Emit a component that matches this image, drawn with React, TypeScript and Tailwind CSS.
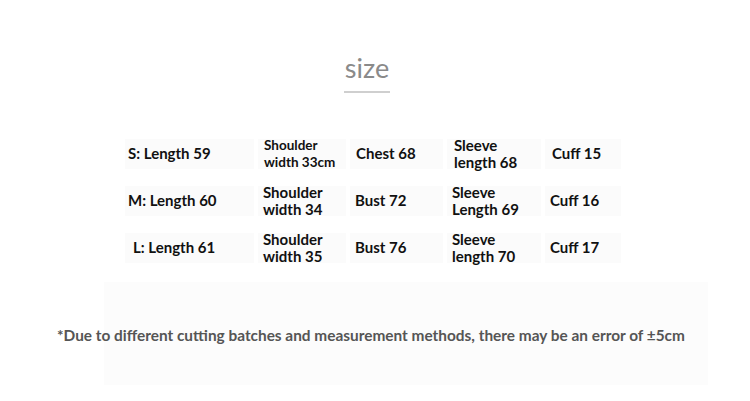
import React from 'react';

type Cell = { lines: string[]; pad: number; w: number; small?: boolean };

const rows: Cell[][] = [
  [
    { lines: ['S: Length 59'], pad: 3, w: 133 },
    { lines: ['Shoulder', 'width 33cm'], pad: 6, w: 92, small: true },
    { lines: ['Chest 68'], pad: 6, w: 97 },
    { lines: ['Sleeve', 'length 68'], pad: 7, w: 98 },
    { lines: ['Cuff 15'], pad: 7, w: 80 },
  ],
  [
    { lines: ['M: Length 60'], pad: 3, w: 133 },
    { lines: ['Shoulder', 'width 34'], pad: 5, w: 92 },
    { lines: ['Bust 72'], pad: 5, w: 97 },
    { lines: ['Sleeve', 'Length 69'], pad: 5, w: 98 },
    { lines: ['Cuff 16'], pad: 5, w: 80 },
  ],
  [
    { lines: ['L: Length 61'], pad: 8, w: 133 },
    { lines: ['Shoulder', 'width 35'], pad: 5, w: 92 },
    { lines: ['Bust 76'], pad: 5, w: 97 },
    { lines: ['Sleeve', 'length 70'], pad: 5, w: 98 },
    { lines: ['Cuff 17'], pad: 5, w: 80 },
  ],
];

export default function App() {
  return (
    <div className="w-[750px] h-[401px] bg-white overflow-hidden font-['Lato',sans-serif]">
      <div className="flex flex-col items-center pt-[50px] pr-[16px]">
        <div className="text-[27px] leading-[36px] text-[#8a8a8a]">size</div>
        <div className="mt-[5px] w-[46px] h-[2px] bg-[#cfcfcf]" />
      </div>

      <div className="mt-[43px] ml-[125px] flex flex-col gap-[12px]">
        {rows.map((row, ri) => (
          <div key={ri} className="flex h-[35px]">
            {row.map((c, ci) => (
              <div key={ci} className="flex items-center pr-[4px]" style={{ width: c.w }}>
                <div
                  className="h-[30px] flex items-center bg-[#fbfbfb] w-full"
                  style={{ paddingLeft: c.pad }}
                >
                  <div
                    className={
                      c.small
                        ? 'text-[13.5px] leading-[17px] font-bold text-[#111]'
                        : 'text-[15px] leading-[17px] font-bold text-[#111]'
                    }
                  >
                    {c.lines.map((l, li) => (
                      <div key={li} className="whitespace-nowrap">{l}</div>
                    ))}
                  </div>
                </div>
              </div>
            ))}
          </div>
        ))}
      </div>

      <div className="mt-[17px] ml-[104px] w-[604px] h-[103px] bg-[#fcfcfc] pt-[43px]">
        <div className="-ml-[47px] whitespace-nowrap text-[15.4px] leading-[20px] font-bold text-[#555]">
          *Due to different cutting batches and measurement methods, there may be an error of ±5cm
        </div>
      </div>
    </div>
  );
}
